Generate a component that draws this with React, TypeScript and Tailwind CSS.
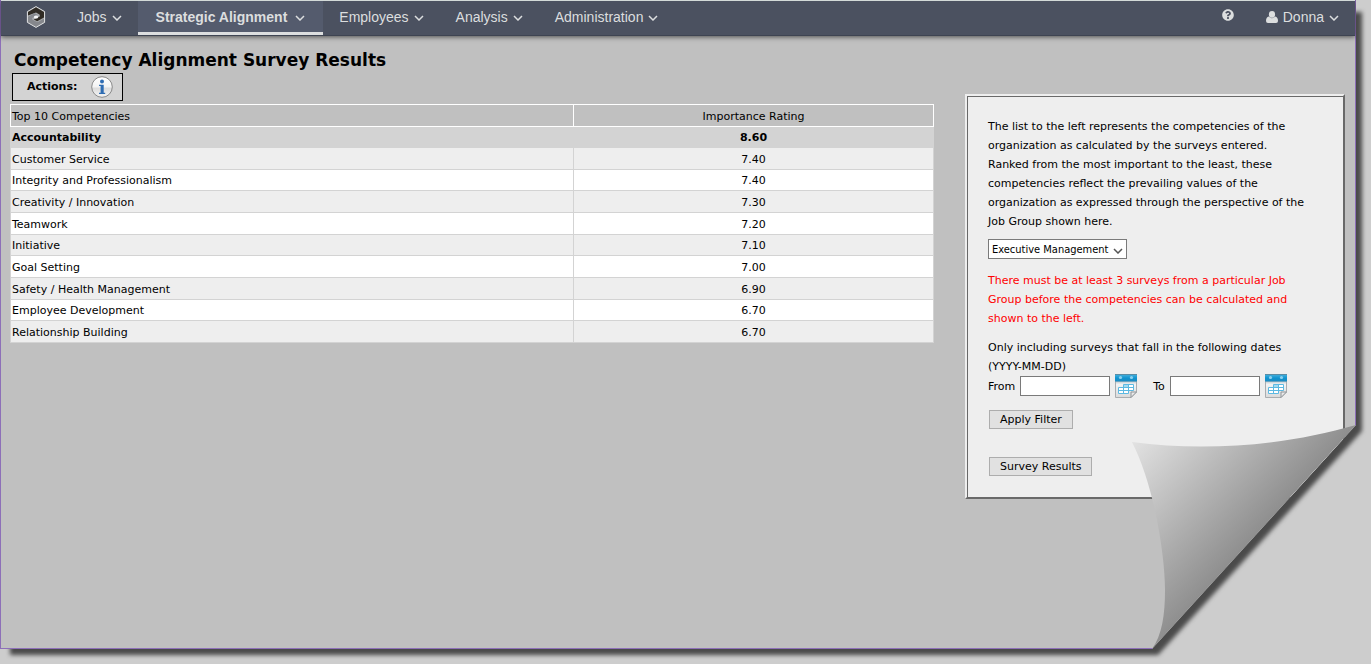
import React, { useState } from "react";
import { FaQuestionCircle } from "react-icons/fa";

const PAGE_SHAPE =
  "[clip-path:polygon(0_0,100%_0,100%_calc(100%_-_224px),calc(100%_-_204px)_100%,0_100%)]";

const menus = [
  { label: "Jobs", active: false },
  { label: "Strategic Alignment", active: true },
  { label: "Employees", active: false },
  { label: "Analysis", active: false },
  { label: "Administration", active: false },
];

const competencies: [string, string][] = [
  ["Accountability", "8.60"],
  ["Customer Service", "7.40"],
  ["Integrity and Professionalism", "7.40"],
  ["Creativity / Innovation", "7.30"],
  ["Teamwork", "7.20"],
  ["Initiative", "7.10"],
  ["Goal Setting", "7.00"],
  ["Safety / Health Management", "6.90"],
  ["Employee Development", "6.70"],
  ["Relationship Building", "6.70"],
];

function Chevron({ className }: { className?: string }) {
  return (
    <svg viewBox="0 0 10 6" width="10" height="6" fill="none" className={className} aria-hidden="true">
      <path d="M1 1 L5 5 L9 1" stroke="currentColor" strokeWidth="1.5" />
    </svg>
  );
}

function Logo() {
  return (
    <svg viewBox="0 0 20 22" width="20" height="22" aria-hidden="true">
      <polygon points="10,0.6 18.6,5.6 18.6,16.4 10,21.4 1.4,16.4 1.4,5.6" fill="#a9abae" stroke="#dfe0e1" strokeWidth="1" />
      <path d="M2 9.6 V6 L10 1.3 L18 6 V11.4 L11.2 15.2 L7.8 13.4 L13.8 10.4 V8.8 L10 6.6 Z" fill="#302b24" />
      <path d="M18 12.6 V16 L10 20.7 L2 16 V10.8 L8.6 7.2 L12 9 L6.2 11.9 V13.4 L10 15.6 L12 16 Z" fill="#85878c" />
      <ellipse cx="10" cy="11" rx="2.2" ry="1.5" fill="#f8f8f8" />
    </svg>
  );
}

function UserIcon() {
  return (
    <svg viewBox="0 0 12 12" width="12" height="12" fill="currentColor" aria-hidden="true">
      <ellipse cx="6" cy="3.4" rx="3.1" ry="3.4" />
      <path d="M2.8 5.6 Q6 8.8 9.2 5.6 Q12 6.2 12 10 Q12 12 10 12 H2 Q0 12 0 10 Q0 6.2 2.8 5.6 Z" />
    </svg>
  );
}

function InfoIcon() {
  return (
    <svg viewBox="0 0 22 22" width="22" height="22" aria-hidden="true">
      <defs>
        <linearGradient id="infoFace" x1="0" y1="0" x2="0" y2="1">
          <stop offset="0" stopColor="#ffffff" />
          <stop offset="0.5" stopColor="#f3f3f3" />
          <stop offset="0.55" stopColor="#dcdcdc" />
          <stop offset="1" stopColor="#f5f5f5" />
        </linearGradient>
      </defs>
      <circle cx="11" cy="11" r="10.3" fill="url(#infoFace)" stroke="#8b8b8b" />
      <circle cx="11" cy="5.4" r="2" fill="#2f6db3" />
      <path d="M8 8.7 H12.7 V16.7 H14.2 V18 H8 V16.7 H9.6 V10 H8 Z" fill="#2f6db3" />
    </svg>
  );
}

function CalendarIcon() {
  return (
    <svg viewBox="0 0 22 24" width="22" height="24" aria-hidden="true">
      <defs>
        <linearGradient id="calTop" x1="0" y1="0" x2="0" y2="1">
          <stop offset="0" stopColor="#4db4de" />
          <stop offset="0.55" stopColor="#0f93cf" />
          <stop offset="1" stopColor="#1c8ac0" />
        </linearGradient>
        <linearGradient id="calBody" x1="0" y1="0" x2="0" y2="1">
          <stop offset="0" stopColor="#b8c4ca" />
          <stop offset="0.2" stopColor="#f3f4f5" />
          <stop offset="1" stopColor="#dadada" />
        </linearGradient>
      </defs>
      <path d="M0.5 7 H21.5 V18 L16 23.5 H0.5 Z" fill="url(#calBody)" stroke="#a9adb0" />
      <rect x="0" y="0" width="22" height="7.5" fill="url(#calTop)" />
      <rect x="0" y="0" width="22" height="1" fill="#5b8ca3" />
      <circle cx="5.5" cy="3.5" r="1.6" fill="#8bd0ee" />
      <circle cx="16.5" cy="3.5" r="1.6" fill="#8bd0ee" />
      <path d="M8.5 10.5 H18.5 V16.5 H13.5 V19.5 H3.5 V13.5 H8.5 Z" fill="#ffffff" />
      <rect x="8.5" y="10.5" width="5" height="3" fill="#a5dbf0" />
      <path
        d="M8.5 10.5 H18.5 V16.5 H3.5 M3.5 13.5 H18.5 M3.5 13.5 V19.5 H13.5 M8.5 10.5 V19.5 M13.5 10.5 V19.5"
        fill="none"
        stroke="#5cb9e2"
      />
      <path d="M16 23.5 V18 H21.5 Z" fill="#e9e9e9" stroke="#8f9497" />
    </svg>
  );
}

function PageCurl() {
  return (
    <svg viewBox="0 0 224 224" width="224" height="224" className="absolute -right-px -bottom-px" aria-hidden="true">
      <defs>
        <linearGradient id="curl" gradientUnits="userSpaceOnUse" x1="0" y1="17" x2="115" y2="122">
          <stop offset="0" stopColor="#e2e2e2" />
          <stop offset="0.5" stopColor="#b8b8b8" />
          <stop offset="1" stopColor="#8e8e8e" />
        </linearGradient>
      </defs>
      <path d="M0 17 C75 27 155 20 224 0 L20 224 C30 210 33 190 33 165 C33 130 22 60 0 17 Z" fill="url(#curl)" />
    </svg>
  );
}

function DateField({ id, label }: { id: string; label: string }) {
  return (
    <div className="flex items-center gap-[5px]">
      <label htmlFor={id}>{label}</label>
      <input id={id} type="text" className="h-5 w-[90px] border border-[#7a7a7a] bg-white px-1" />
      <button type="button" aria-label={`Pick ${label} date`}>
        <CalendarIcon />
      </button>
    </div>
  );
}

function NavBar() {
  return (
    <nav className="relative flex h-9 items-stretch border-t border-b border-t-[#d3dad8] border-b-[#3e4452] bg-[#4b5160] font-['Liberation_Sans',sans-serif] text-sm text-[#dcdedf] shadow-[0_1px_5px_rgba(0,0,0,0.6)]">
      <a href="#home" aria-label="Home" className="flex w-15 items-center justify-center pb-0.5 pl-2.5">
        <Logo />
      </a>
      {menus.map((m) => (
        <button
          key={m.label}
          type="button"
          className={
            m.active
              ? "flex items-center gap-2 border-b-3 border-[#dcdedf] bg-[#545b6d] px-[18px] font-bold"
              : "flex items-center gap-[5px] border-b-3 border-transparent px-4"
          }
        >
          {m.label}
          <Chevron className="mt-0.5" />
        </button>
      ))}
      <button type="button" aria-label="Help" className="ml-auto flex items-center px-4 pb-1.5">
        <FaQuestionCircle size={12} />
      </button>
      <button type="button" className="flex items-center gap-[5px] border-b-3 border-transparent px-4">
        <UserIcon />
        Donna
        <Chevron className="mt-0.5" />
      </button>
    </nav>
  );
}

function CompetencyTable() {
  return (
    <table className="h-[239px] min-w-0 flex-1 table-fixed border-collapse">
      <thead>
        <tr>
          <th className="w-[61%] border border-white px-px pt-1 text-left font-normal">Top 10 Competencies</th>
          <th className="border border-white px-px pt-1 text-center font-normal">Importance Rating</th>
        </tr>
      </thead>
      <tbody>
        {competencies.map(([name, rating], i) => (
          <tr
            key={name}
            className={i === 0 ? "bg-[#d3d3d3] font-bold" : i % 2 ? "bg-[#eeeeee]" : "bg-white"}
          >
            <td className="border border-[#d3d3d3] px-px pt-[3px]">{name}</td>
            <td className="border border-[#d3d3d3] px-px pt-[3px] text-center">{rating}</td>
          </tr>
        ))}
      </tbody>
    </table>
  );
}

function FilterPanel() {
  const [group, setGroup] = useState("Executive Management");
  return (
    <aside className="-mt-2.5 w-[380px] shrink-0 border-2 border-t-[#eeeeee] border-r-[#696969] border-b-[#696969] border-l-[#eeeeee]">
      <form
        className="border-t border-l border-[#696969] bg-[#eeeeee] px-5 pt-5 pb-[21px] leading-[19px]"
        onSubmit={(e) => e.preventDefault()}
      >
        <p className="max-w-80">
          The list to the left represents the competencies of the organization as calculated by the surveys
          entered. Ranked from the most important to the least, these competencies reflect the prevailing values
          of the organization as expressed through the perspective of the Job Group shown here.
        </p>
        <div className="relative mt-2 flex w-[139px] items-center">
          <select
            aria-label="Job Group"
            value={group}
            onChange={(e) => setGroup(e.target.value)}
            className="h-5 w-full appearance-none border border-[#7a7a7a] bg-white pl-[3px] font-['DejaVu_Sans_Condensed','DejaVu_Sans',sans-serif] text-[11px] leading-none"
          >
            <option>Executive Management</option>
          </select>
          <Chevron className="pointer-events-none absolute right-1 mt-1 text-[#555555]" />
        </div>
        <p className="mt-3 max-w-80 text-[#ff0000]">
          There must be at least 3 surveys from a particular Job Group before the competencies can be calculated
          and shown to the left.
        </p>
        <p className="mt-2.5 max-w-80">Only including surveys that fall in the following dates (YYYY-MM-DD)</p>
        <div className="-mt-0.5 flex gap-4">
          <DateField id="from" label="From" />
          <DateField id="to" label="To" />
        </div>
        <div className="mt-3 flex flex-col items-start gap-7 pl-px">
          <button type="submit" className="h-[19px] border border-[#adadad] bg-[#e1e1e1] px-2.5 leading-none">
            Apply Filter
          </button>
          <button type="button" className="h-[19px] border border-[#adadad] bg-[#e1e1e1] px-2.5 leading-none">
            Survey Results
          </button>
        </div>
      </form>
    </aside>
  );
}

export default function App() {
  return (
    <div className="flex min-h-screen bg-[#cdcdcd] pr-[15px] pb-[15px] font-['DejaVu_Sans',sans-serif] text-[11px] text-black">
      <div className="relative flex min-w-0 flex-1">
        <div className="absolute top-3 -right-1.5 -bottom-1.5 left-2.5 blur-[2px]">
          <div className={`size-full bg-[#4a4a4a] ${PAGE_SHAPE}`} />
        </div>
        <div
          className={`relative min-w-0 flex-1 border-r border-b border-l border-[#8d6fb8] bg-[#c0c0c0] ${PAGE_SHAPE}`}
        >
          <NavBar />
          <main className="pr-2.5 pl-[9px]">
            <h1 className="pt-3.5 pl-1 text-[17px] leading-[21px] font-bold">Competency Alignment Survey Results</h1>
            <div className="mt-0.5 ml-0.5 flex h-7 w-[111px] items-center gap-3.5 border border-black bg-[#d3d3d3] pl-3.5 font-bold">
              Actions:
              <button type="button" aria-label="Information">
                <InfoIcon />
              </button>
            </div>
            <div className="mt-[3px] flex items-start gap-[31px]">
              <CompetencyTable />
              <FilterPanel />
            </div>
          </main>
          <PageCurl />
        </div>
      </div>
    </div>
  );
}
